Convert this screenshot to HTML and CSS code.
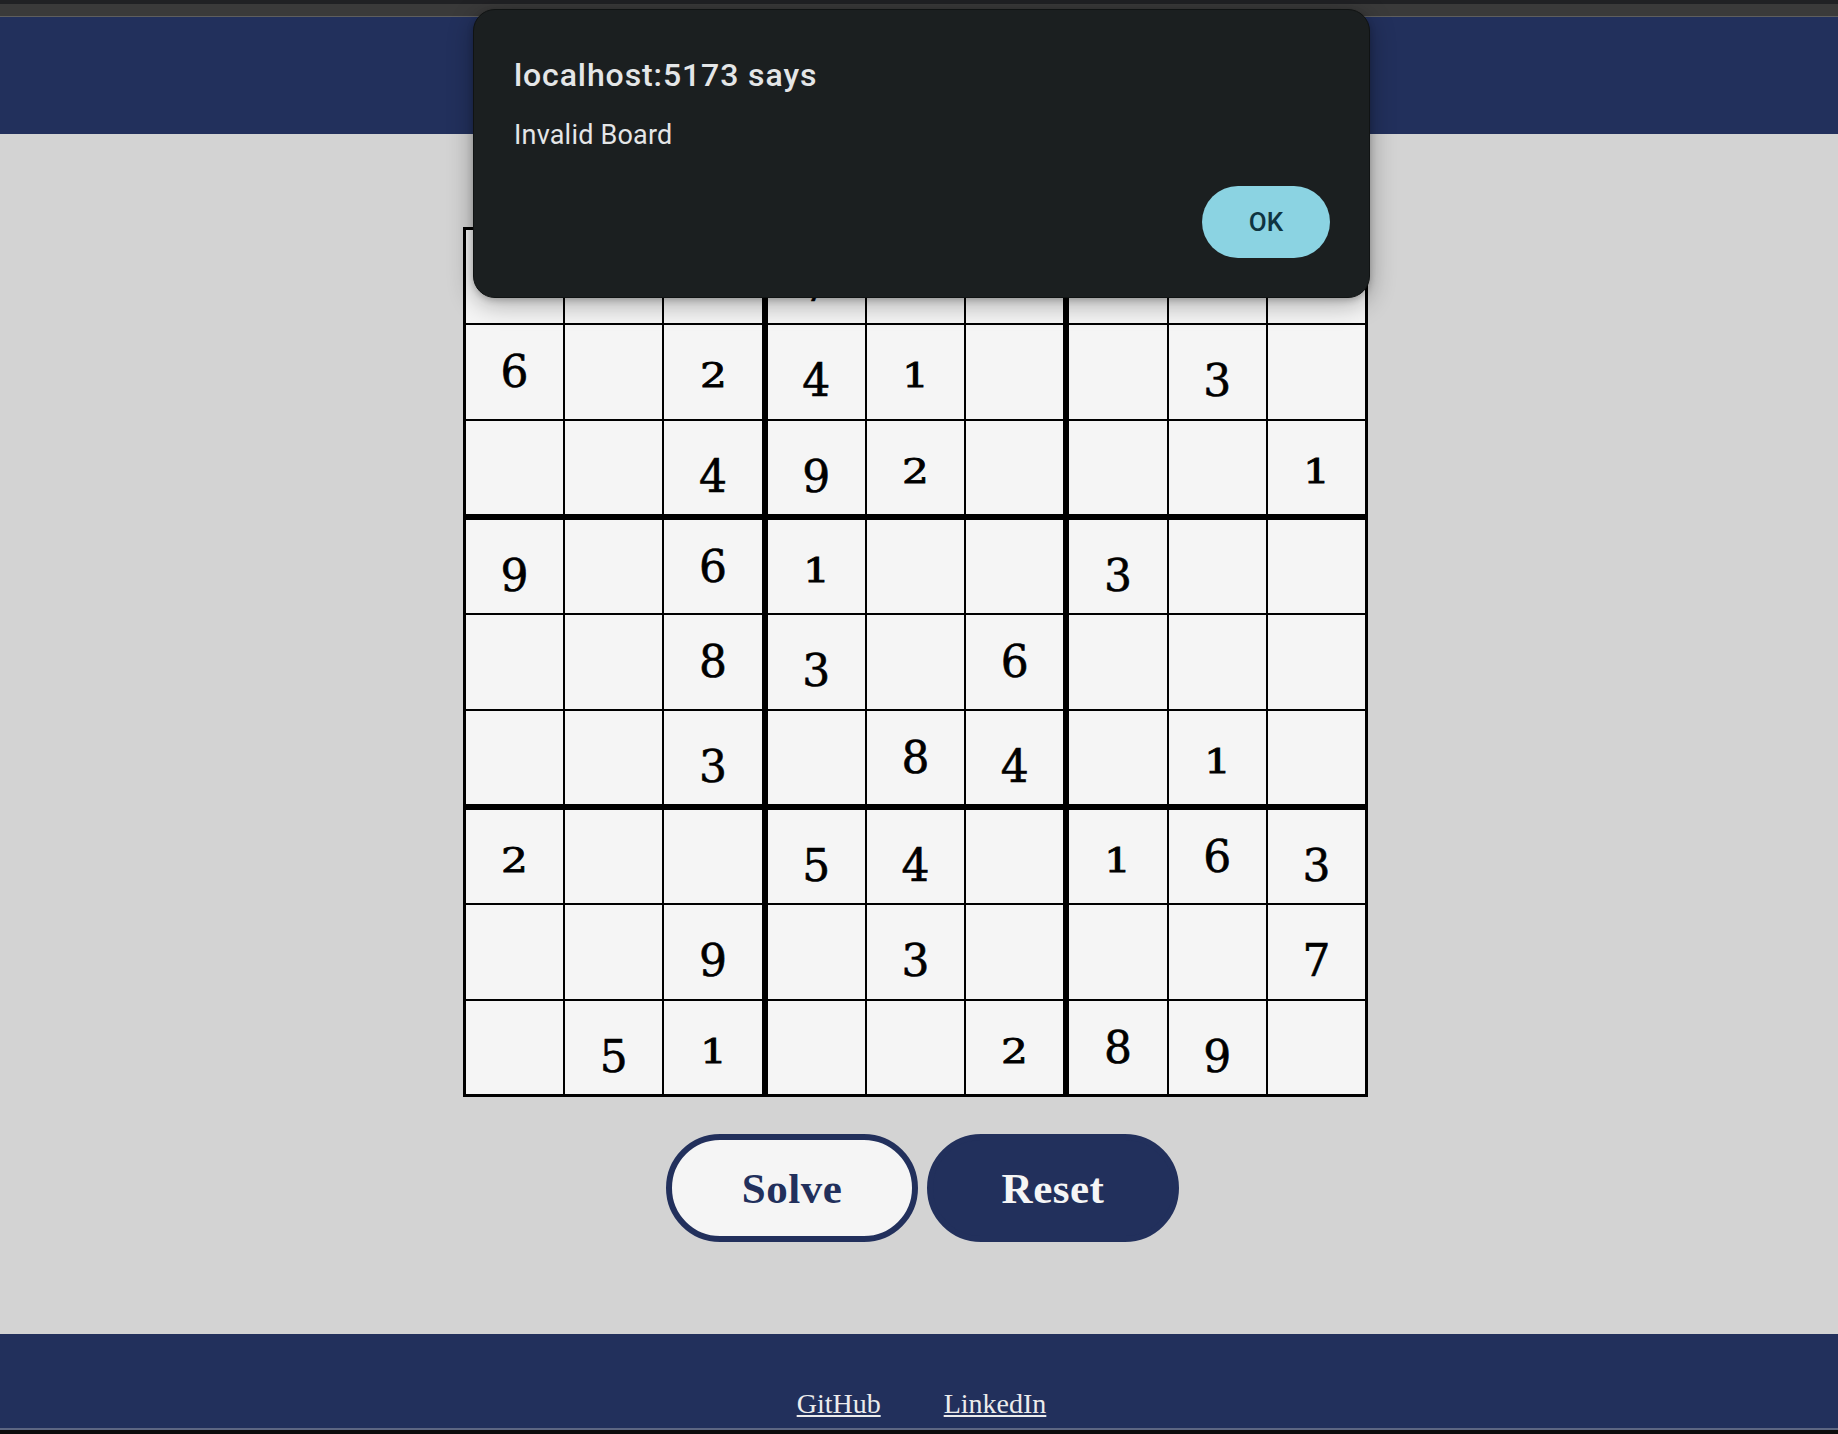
FILE: index.html
```html
<!DOCTYPE html>
<html lang="en">
<head>
<meta charset="utf-8">
<title>Sudoku Solver</title>
<link rel="stylesheet" href="styles.css">
</head>
<body>
<div class="chrome">
  <div class="chrome-dark"></div>
  <div class="chrome-gray"></div>
</div>
<header class="site-header"></header>
<main class="main">
  <div class="board-wrap">
    <div class="board">
      <div class="box">
        <div class="cell"></div><div class="cell"></div><div class="cell"></div>
        <div class="cell"><span class="n-up">6</span></div><div class="cell"></div><div class="cell"><span class="n-low">2</span></div>
        <div class="cell"></div><div class="cell"></div><div class="cell"><span class="n-down">4</span></div>
      </div>
      <div class="box">
        <div class="cell"><span class="n-down">7</span></div><div class="cell"></div><div class="cell"></div>
        <div class="cell"><span class="n-down">4</span></div><div class="cell"><span class="n-low">1</span></div><div class="cell"></div>
        <div class="cell"><span class="n-down">9</span></div><div class="cell"><span class="n-low">2</span></div><div class="cell"></div>
      </div>
      <div class="box">
        <div class="cell"></div><div class="cell"></div><div class="cell"></div>
        <div class="cell"></div><div class="cell"><span class="n-down">3</span></div><div class="cell"></div>
        <div class="cell"></div><div class="cell"></div><div class="cell"><span class="n-low">1</span></div>
      </div>
      <div class="box">
        <div class="cell"><span class="n-down">9</span></div><div class="cell"></div><div class="cell"><span class="n-up">6</span></div>
        <div class="cell"></div><div class="cell"></div><div class="cell"><span class="n-up">8</span></div>
        <div class="cell"></div><div class="cell"></div><div class="cell"><span class="n-down">3</span></div>
      </div>
      <div class="box">
        <div class="cell"><span class="n-low">1</span></div><div class="cell"></div><div class="cell"></div>
        <div class="cell"><span class="n-down">3</span></div><div class="cell"></div><div class="cell"><span class="n-up">6</span></div>
        <div class="cell"></div><div class="cell"><span class="n-up">8</span></div><div class="cell"><span class="n-down">4</span></div>
      </div>
      <div class="box">
        <div class="cell"><span class="n-down">3</span></div><div class="cell"></div><div class="cell"></div>
        <div class="cell"></div><div class="cell"></div><div class="cell"></div>
        <div class="cell"></div><div class="cell"><span class="n-low">1</span></div><div class="cell"></div>
      </div>
      <div class="box">
        <div class="cell"><span class="n-low">2</span></div><div class="cell"></div><div class="cell"></div>
        <div class="cell"></div><div class="cell"></div><div class="cell"><span class="n-down">9</span></div>
        <div class="cell"></div><div class="cell"><span class="n-down">5</span></div><div class="cell"><span class="n-low">1</span></div>
      </div>
      <div class="box">
        <div class="cell"><span class="n-down">5</span></div><div class="cell"><span class="n-down">4</span></div><div class="cell"></div>
        <div class="cell"></div><div class="cell"><span class="n-down">3</span></div><div class="cell"></div>
        <div class="cell"></div><div class="cell"></div><div class="cell"><span class="n-low">2</span></div>
      </div>
      <div class="box">
        <div class="cell"><span class="n-low">1</span></div><div class="cell"><span class="n-up">6</span></div><div class="cell"><span class="n-down">3</span></div>
        <div class="cell"></div><div class="cell"></div><div class="cell"><span class="n-down">7</span></div>
        <div class="cell"><span class="n-up">8</span></div><div class="cell"><span class="n-down">9</span></div><div class="cell"></div>
      </div>
    </div>
  </div>
  <div class="actions">
    <button class="btn btn-solve" type="button">Solve</button>
    <button class="btn btn-reset" type="button">Reset</button>
  </div>
</main>
<footer class="site-footer">
  <a class="foot-link" href="#">GitHub</a>
  <a class="foot-link" href="#">LinkedIn</a>
</footer>
<div class="bottom-line"></div>
<div class="bottom-dark"></div>

<div class="dialog" role="alertdialog">
  <div class="dialog-title">localhost:5173 says</div>
  <div class="dialog-msg">Invalid Board</div>
  <div class="dialog-actions">
    <button class="dialog-ok" type="button">OK</button>
  </div>
</div>
</body>
</html>
```

FILE: styles.css
```css
* { box-sizing: border-box; }

html, body {
  margin: 0;
  padding: 0;
}

body {
  width: 1838px;
  height: 1434px;
  overflow: hidden;
  background: #d3d3d3;
  font-family: "Liberation Serif", serif;
  position: relative;
}

.chrome-dark {
  height: 4px;
  background: #202124;
}

.chrome-gray {
  height: 13px;
  background: #3a3a3a;
  border-bottom: 1px solid #5e5e5e;
}

.site-header {
  height: 117px;
  background: #22305c;
}

.main {
  height: 1200px;
  padding-top: 93px;
  background: #d3d3d3;
}

.board-wrap {
  display: flex;
  justify-content: center;
  padding-right: 7px;
}

.board {
  width: 905px;
  height: 870px;
  border: 3px solid #000;
  background: #000;
  display: grid;
  grid-template-columns: repeat(3, minmax(0, 1fr));
  grid-template-rows: repeat(3, minmax(0, 1fr));
  gap: 6px;
}

.box {
  display: grid;
  grid-template-columns: repeat(3, minmax(0, 1fr));
  grid-template-rows: repeat(3, minmax(0, 1fr));
  gap: 2px;
}

.cell {
  background: #f5f5f5;
  text-align: center;
  font-family: "DejaVu Serif", "Liberation Serif", serif;
  font-size: 44px;
  line-height: 93.33px;
  color: #000;
  overflow: hidden;
  -webkit-text-stroke: 0.6px #000;
}

.cell span {
  line-height: 1;
}

.n-up {
  display: inline-block;
}

.n-down {
  display: inline-block;
  vertical-align: -9px;
}

.n-low {
  display: inline-block;
  font-size: 33px;
  transform: scaleX(1.28);
  -webkit-text-stroke: 0.8px #000;
}

.actions {
  display: flex;
  justify-content: center;
  gap: 9px;
  margin-top: 37px;
  padding-left: 7px;
}

.btn {
  width: 252px;
  height: 108px;
  border-radius: 54px;
  border: 6px solid #22305c;
  font-family: "Liberation Serif", serif;
  font-weight: 700;
  font-size: 43px;
  letter-spacing: 0.5px;
  padding: 0;
  cursor: pointer;
}

.btn-solve {
  background: #f5f5f5;
  color: #22305c;
}

.btn-reset {
  background: #22305c;
  color: #f5f5f5;
}

.site-footer {
  height: 94px;
  background: #22305c;
  display: flex;
  justify-content: center;
  gap: 63px;
  padding-top: 54px;
  padding-left: 5px;
}

.foot-link {
  font-family: "Liberation Serif", serif;
  font-size: 28px;
  line-height: 32px;
  color: #ececec;
  text-decoration: underline;
}

.bottom-line {
  height: 2px;
  background: #5d6682;
}

.bottom-dark {
  height: 4px;
  background: #0c0c0c;
}

.dialog {
  position: absolute;
  top: 9px;
  left: 473px;
  width: 897px;
  height: 289px;
  background: #1b1f20;
  border: 1px solid #101313;
  border-radius: 22px;
  box-shadow: 0 6px 26px rgba(0, 0, 0, 0.32), 0 2px 6px rgba(0, 0, 0, 0.2);
  padding: 47px 39px 39px 40px;
  display: flex;
  flex-direction: column;
  font-family: Roboto, "Noto Sans", sans-serif;
}

.dialog-title {
  font-size: 32px;
  line-height: 37px;
  font-weight: 500;
  letter-spacing: 0.9px;
  color: #e4e6e7;
}

.dialog-msg {
  margin-top: 25px;
  font-size: 27px;
  line-height: 32px;
  letter-spacing: 0.2px;
  color: #e4e6e7;
}

.dialog-actions {
  margin-top: auto;
  display: flex;
  justify-content: flex-end;
}

.dialog-ok {
  width: 128px;
  height: 72px;
  border: none;
  border-radius: 36px;
  background: #8bd3e2;
  color: #0f3440;
  font-family: Roboto, "Noto Sans", sans-serif;
  font-size: 26px;
  font-weight: 500;
  padding: 0;
  cursor: pointer;
}
```
